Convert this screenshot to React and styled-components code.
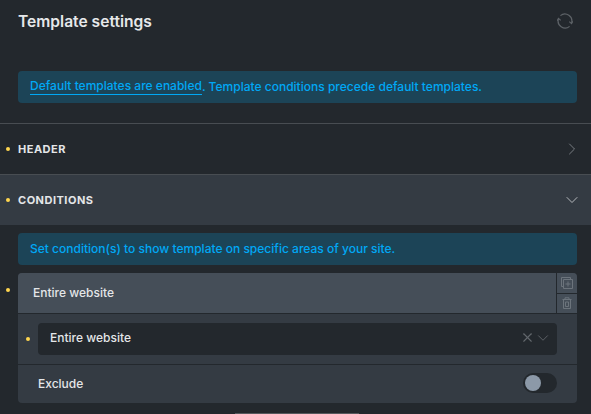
import React from "react";
import styled, { createGlobalStyle } from "styled-components";
import { ChevronDown, ChevronRight, X } from "lucide-react";

const GlobalStyle = createGlobalStyle`
  html, body {
    margin: 0;
    padding: 0;
    background: #23282d;
    overflow: hidden;
  }
  * { box-sizing: border-box; }
`;

const Panel = styled.div`
  width: 591px;
  height: 414px;
  overflow: hidden;
  background: #23282d;
  font-family: Inter, "Liberation Sans", sans-serif;
  font-size: 12px;
  color: #e4e6e8;
`;

const TitleBar = styled.header`
  height: 71px;
  padding: 12px 18px 0;
  display: flex;
  justify-content: space-between;
  align-items: flex-start;
`;

const Title = styled.h1`
  margin: 0;
  font-size: 15.6px;
  line-height: 20px;
  font-weight: 600;
  color: #e6e8ea;
`;

const RefreshButton = styled.span`
  display: flex;
  margin: 1px 0 0 0;
  color: #5d6267;
`;

const Notice = styled.div`
  height: 32px;
  margin: 0 14px 0 18px;
  padding: 0 12px 2px;
  display: flex;
  align-items: center;
  border-radius: 4px;
  background: #1c4457;
  color: #00a8f5;
  font-size: 12.03px;
  font-weight: 500;
  white-space: pre;
`;

const NoticeLink = styled.span`
  border-bottom: 1px solid #00a8f5;
  line-height: 17px;
`;

const Section = styled.div`
  height: 51px;
  margin-top: ${(p) => (p.$first ? "20px" : "0")};
  padding: 0 9px 0 6px;
  display: flex;
  align-items: center;
  border-top: 1px solid #484d52;
  background: ${(p) => (p.$open ? "#343b43" : "transparent")};
`;

const Dot = styled.i`
  flex: none;
  width: 4px;
  height: 4px;
  border-radius: 50%;
  background: #ffd64f;
`;

const SectionTitle = styled.span`
  margin-left: 8px;
  flex: 1;
  font-size: 11px;
  font-weight: 700;
  letter-spacing: 0.5px;
  color: #e4e6e8;
`;

const SectionBody = styled.div`
  padding: 8px 14px 0 6px;
  display: flex;
  flex-direction: column;
  gap: 8px;
`;

const BodyNotice = styled(Notice)`
  margin: 0 0 0 12px;
`;

const CardRow = styled.div`
  display: flex;
  align-items: flex-start;
`;

const CardDot = styled(Dot)`
  margin: 15px 8px 0 0;
`;

const Card = styled.div`
  flex: 1;
  border-radius: 4px;
  overflow: hidden;
  background: #343b43;
`;

const CardHead = styled.div`
  height: 41px;
  display: flex;
  border-bottom: 1px solid #23282d;
  background: #454e58;
`;

const CardTitle = styled.div`
  flex: 1;
  padding: 0 0 1px 15px;
  display: flex;
  align-items: center;
  font-weight: 500;
`;

const CardActions = styled.div`
  width: 21px;
  display: flex;
  flex-direction: column;
  border-left: 1px solid #23282d;
`;

const CardAction = styled.span`
  flex: 1;
  display: flex;
  align-items: center;
  justify-content: center;
  color: #6c747c;

  & + & {
    border-top: 1px solid #23282d;
  }
`;

const SelectRow = styled.div`
  height: 51px;
  padding: 0 20px 0 8px;
  display: flex;
  align-items: center;
  border-bottom: 1px solid #23282d;
`;

const SelectDot = styled(Dot)`
  margin: 0 8px 0 0;
`;

const Select = styled.div`
  flex: 1;
  height: 32px;
  padding: 0 5px 3px 12px;
  display: flex;
  align-items: center;
  border-radius: 4px;
  background: #23282d;
  font-weight: 500;
`;

const SelectValue = styled.span`
  flex: 1;
`;

const SelectIcon = styled.span`
  display: flex;
  margin-left: ${(p) => p.$gap || 0}px;
  color: #62676c;
`;

const ToggleRow = styled.div`
  height: 38px;
  padding: 0 20px 2px;
  display: flex;
  align-items: center;
  justify-content: space-between;
  font-weight: 500;
`;

const Toggle = styled.span`
  width: 34px;
  height: 20px;
  padding: 2px;
  border-radius: 10px;
  background: #23282d;
`;

const Knob = styled.span`
  display: block;
  width: 16px;
  height: 16px;
  border-radius: 50%;
  background: #8c99a8;
`;

const NextButton = styled.div`
  width: 124px;
  height: 1px;
  margin: 10px 0 0 235px;
  background: #55595d;
`;

const RefreshIcon = () => (
  <svg width="16" height="16" viewBox="0 0 16 16" fill="none" stroke="currentColor" strokeWidth="1.2">
    <path d="M3.4 2.6A7 7 0 0 1 14.4 10.4M12.3 8.6l2.2 2 1.4-2.4" />
    <path d="M3.4 2.6A7 7 0 0 1 14.4 10.4M12.3 8.6l2.2 2 1.4-2.4" transform="rotate(180 8 8)" />
  </svg>
);

const CloneIcon = () => (
  <svg width="12" height="12" viewBox="0 0 12 12" fill="none" stroke="currentColor" strokeWidth="1">
    <path d="M9.5 2.5v-2h-9v9h2" />
    <path d="M2.5 2.5h9v9h-9z" />
    <path d="M7 4.5v5M4.5 7h5" />
  </svg>
);

const TrashIcon = () => (
  <svg width="12" height="12" viewBox="0 0 12 12" fill="none" stroke="currentColor" strokeWidth="1">
    <path d="M1.5 2.5h9M4 2.5V.8h4v1.7M2.5 2.5v9h7v-9" />
    <path d="M4.5 5v4.5h3V5z" />
  </svg>
);

export default function App() {
  return (
    <Panel>
      <GlobalStyle />
      <TitleBar>
        <Title>Template settings</Title>
        <RefreshButton>
          <RefreshIcon />
        </RefreshButton>
      </TitleBar>
      <Notice>
        <NoticeLink>Default templates are enabled</NoticeLink>. Template conditions precede default templates.
      </Notice>
      <Section $first>
        <Dot />
        <SectionTitle>HEADER</SectionTitle>
        <ChevronRight size={20} strokeWidth={1.2} color="#777c81" />
      </Section>
      <Section $open>
        <Dot />
        <SectionTitle>CONDITIONS</SectionTitle>
        <ChevronDown size={20} strokeWidth={1.2} color="#b4b8bc" />
      </Section>
      <SectionBody>
        <BodyNotice>Set condition(s) to show template on specific areas of your site.</BodyNotice>
        <CardRow>
          <CardDot />
          <Card>
            <CardHead>
              <CardTitle>Entire website</CardTitle>
              <CardActions>
                <CardAction>
                  <CloneIcon />
                </CardAction>
                <CardAction>
                  <TrashIcon />
                </CardAction>
              </CardActions>
            </CardHead>
            <SelectRow>
              <SelectDot />
              <Select>
                <SelectValue>Entire website</SelectValue>
                <SelectIcon>
                  <X size={15} strokeWidth={1.8} />
                </SelectIcon>
                <SelectIcon $gap={-1}>
                  <ChevronDown size={18} strokeWidth={1.2} />
                </SelectIcon>
              </Select>
            </SelectRow>
            <ToggleRow>
              Exclude
              <Toggle>
                <Knob />
              </Toggle>
            </ToggleRow>
          </Card>
        </CardRow>
      </SectionBody>
      <NextButton />
    </Panel>
  );
}
